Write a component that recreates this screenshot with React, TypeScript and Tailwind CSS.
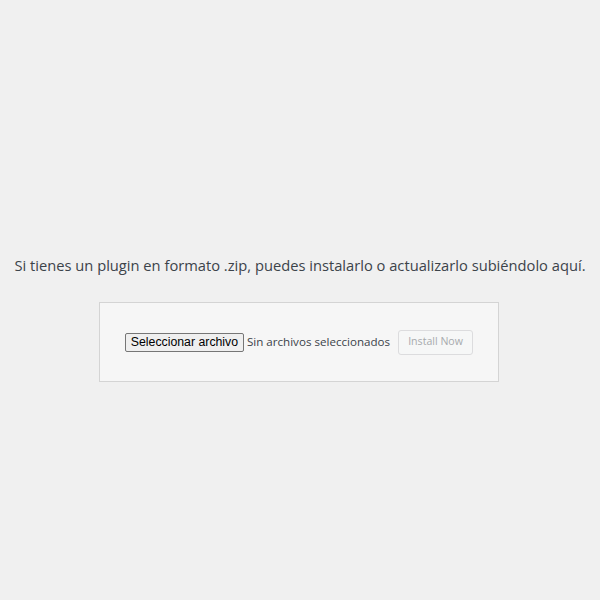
import React from 'react';

const App: React.FC = () => {
  return (
    <div className="w-[600px] h-[600px] bg-[#f0f0f0] flex flex-col items-center pt-[253px] font-['Open_Sans','Noto_Sans',sans-serif] text-[#3c434a]">
      <p className="text-[14.7px] leading-6 whitespace-nowrap">
        Si tienes un plugin en formato .zip, puedes instalarlo o actualizarlo subiéndolo aquí.
      </p>

      {/* Formulario de subida */}
      <div className="mt-[25px] mr-[2px] w-[400px] h-[80px] bg-[#f6f6f6] border border-[#d4d4d4] flex items-center justify-center gap-2">
        <div className="flex items-center gap-[3px]">
          <span className="w-[119px] h-[19px] flex items-center justify-center border border-[#767676] bg-[#efefef] rounded-[2px] text-[12.3px] text-black font-['Liberation_Sans',Arial,sans-serif]">
            Seleccionar archivo
          </span>
          <span className="text-[11.6px] text-[#3c434a]">Sin archivos seleccionados</span>
        </div>
        <button
          disabled
          className="w-[75px] h-[25px] border border-[#dcdcde] bg-[#f6f7f7] rounded-[3px] text-[10.6px] text-[#a7aaad]"
        >
          Install Now
        </button>
      </div>
    </div>
  );
};

export default App;
